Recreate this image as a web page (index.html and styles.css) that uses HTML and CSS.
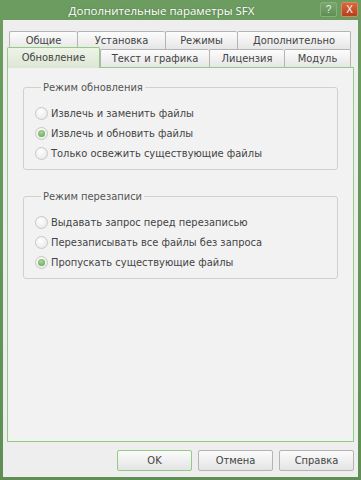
FILE: index.html
```html
<!DOCTYPE html>
<html lang="ru">
<head>
  <meta charset="UTF-8">
  <title>Дополнительные параметры SFX</title>
  <link rel="stylesheet" href="styles.css">
</head>
<body>
  <div class="window">
    <div class="titlebar">
      <div class="title">Дополнительные параметры SFX</div>
      <div class="caption-buttons">
        <span class="cap-btn help">?</span>
        <span class="cap-btn close">X</span>
      </div>
    </div>

    <div class="client">
      <div class="tab-row back">
        <div class="tab" style="width:68px">Общие</div>
        <div class="tab" style="width:88px">Установка</div>
        <div class="tab" style="width:72px">Режимы</div>
        <div class="tab" style="width:114px">Дополнительно</div>
      </div>
      <div class="tab-row front">
        <div class="tab active" style="width:93px">Обновление</div>
        <div class="tab" style="width:109px">Текст и графика</div>
        <div class="tab" style="width:75px">Лицензия</div>
        <div class="tab" style="width:67px">Модуль</div>
      </div>

      <div class="panel">
        <fieldset class="group">
          <legend>Режим обновления</legend>
          <div class="option"><span class="radio"></span>Извлечь и заменить файлы</div>
          <div class="option"><span class="radio checked"></span>Извлечь и обновить файлы</div>
          <div class="option"><span class="radio"></span>Только освежить существующие файлы</div>
        </fieldset>

        <fieldset class="group">
          <legend>Режим перезаписи</legend>
          <div class="option"><span class="radio"></span>Выдавать запрос перед перезаписью</div>
          <div class="option"><span class="radio"></span>Перезаписывать все файлы без запроса</div>
          <div class="option"><span class="radio checked"></span>Пропускать существующие файлы</div>
        </fieldset>
      </div>

      <div class="buttons">
        <button class="default">OK</button>
        <button>Отмена</button>
        <button>Справка</button>
      </div>
    </div>
  </div>
</body>
</html>
```

FILE: styles.css
```css
body {
  margin: 0;
  font-family: "DejaVu Sans Condensed", "DejaVu Sans", sans-serif;
  font-size: 11px;
  color: #444;
}

.window {
  width: 361px;
  height: 480px;
  box-sizing: border-box;
  display: flex;
  flex-direction: column;
  padding: 0 3px 3px 3px;
  background: linear-gradient(#6c9c60, #5f8f55);
}

.titlebar {
  height: 20px;
  display: flex;
  align-items: center;
}

.title {
  flex: 1;
  text-align: center;
  color: #fff;
  font-family: "Open Sans", sans-serif;
  font-size: 11.5px;
  text-shadow: 0 0 2px rgba(0,0,0,0.25);
}

.caption-buttons {
  display: flex;
  gap: 4px;
  margin-top: 2px;
  align-self: flex-start;
}

.cap-btn {
  width: 15px;
  height: 13px;
  border: 1px solid #88b07c;
  border-radius: 2px;
  font-family: "Liberation Sans", sans-serif;
  font-size: 10px;
  line-height: 13px;
  text-align: center;
  color: #e8f0e0;
  background: linear-gradient(#7aa86e, #5f8e54);
}

.cap-btn.close {
  border-color: #d88a60;
  background: linear-gradient(#d8683a, #b4401c);
  color: #fff;
}

.client {
  flex: 1;
  background: #eeeeee;
  padding: 11px 4px 0 4px;
}

.tab-row {
  display: flex;
  height: 18px;
}

.tab-row.back {
  margin: 0 2px;
}

.tab-row.front {
  margin-right: 2px;
}

.tab {
  box-sizing: border-box;
  height: 18px;
  border: 1px solid #b4b4b4;
  border-bottom: none;
  border-right: none;
  border-radius: 2px 2px 0 0;
  background: linear-gradient(#fcfcfc, #e6e6e6);
  text-align: center;
  line-height: 17px;
  color: #444;
}

.tab:last-child {
  border-right: 1px solid #b4b4b4;
}

.tab.active {
  height: 21px;
  margin-top: -2px;
  margin-bottom: -1px;
  border: 1px solid #92cc82;
  border-bottom: none;
  background: linear-gradient(#eef3e8, #dde6d4);
  line-height: 19px;
  position: relative;
  z-index: 1;
}

.panel {
  height: 375px;
  box-sizing: border-box;
  border: 1px solid #92cc82;
  background: #f2f2f2;
  padding: 13px 15px 0 15px;
}

.group {
  margin: 0 0 20px 0;
  padding: 9px 11px 6px 11px;
  border: 1px solid #d0d0d0;
  border-radius: 3px;
}

.group legend {
  margin-left: 6px;
  padding: 0 2px;
  color: #555;
}

.option {
  height: 20px;
  display: flex;
  align-items: center;
  gap: 3px;
  color: #444;
}

.radio {
  width: 11px;
  height: 11px;
  border: 1px solid #c8c8c8;
  border-radius: 50%;
  background: radial-gradient(circle at 40% 35%, #ffffff, #e4e4e4);
  display: flex;
  align-items: center;
  justify-content: center;
}

.radio.checked::after {
  content: "";
  width: 7px;
  height: 7px;
  border-radius: 50%;
  background: radial-gradient(circle at 45% 35%, #a8d898, #5aa048);
}

.buttons {
  display: flex;
  justify-content: flex-end;
  gap: 6px;
  padding-top: 8px;
}

button {
  width: 75px;
  height: 21px;
  font-family: "DejaVu Sans Condensed", "DejaVu Sans", sans-serif;
  font-size: 11px;
  color: #444;
  border: 1px solid #b4b4b4;
  border-radius: 2px;
  background: linear-gradient(#fbfbfb, #e4e4e4);
  padding: 0;
}

button.default {
  border-color: #92cc82;
}
```
